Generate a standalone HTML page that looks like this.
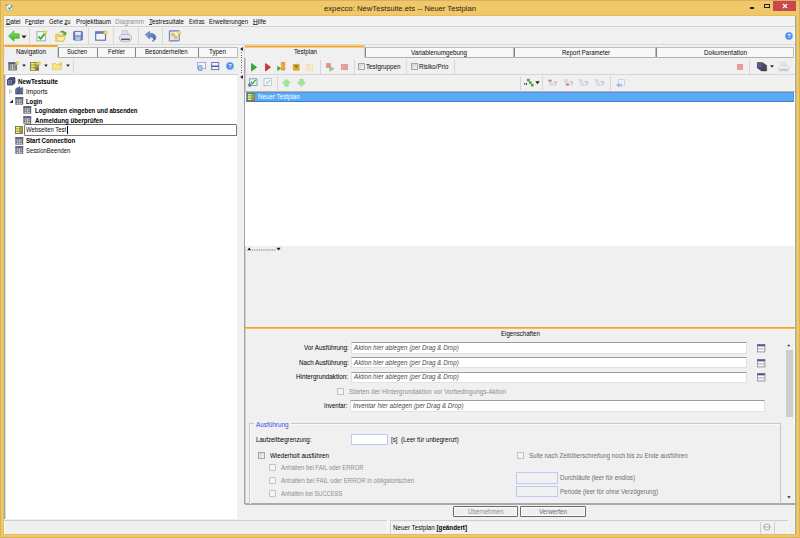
<!DOCTYPE html>
<html lang="de">
<head>
<meta charset="utf-8">
<title>expecco: NewTestsuite.ets -- Neuer Testplan</title>
<style>
html,body{margin:0;padding:0;}
body{width:800px;height:538px;overflow:hidden;background:#f0c869;font-family:"Liberation Sans",sans-serif;font-size:7px;color:#111;position:relative;}
div,span{box-sizing:border-box;}
.a{position:absolute;}
svg{position:absolute;overflow:visible;}
.t{position:absolute;white-space:nowrap;line-height:10px;font-size:6.3px;transform-origin:0 50%;color:#0a0a0a;}
.t.cap{font-size:7.8px;line-height:12px;color:#2a2416;}
.t.b,.t b{font-weight:bold;color:#000;}
.t.gray{color:#8e8e8e;}
.t.gray2{color:#6e6e6e;}
.t.it{font-style:italic;color:#4a4a4a;}
.t.blue{color:#2f55d4;}
.t.wht{color:#fff;}
.t.lbl{color:#000;}
.t u{text-decoration:underline;text-decoration-thickness:0.500px;text-underline-offset:0.200px;text-decoration-color:#444;}
.sep{position:absolute;width:1px;background:#d6d6d6;}
.tab{position:absolute;background:#f8f8f8;border:1px solid #bcbcbc;border-left-color:#848484;border-bottom-color:#b0b0b0;border-radius:0 0 0 1.500px;}
.hl{position:absolute;height:1px;background:#d9d9d9;}
.chk{position:absolute;width:7px;height:7px;border:1px solid #c2c2c2;background:#f5f5f5;}
.chk.d{border-color:#a6a6a6;background:linear-gradient(135deg,#cecece,#f8f8f8);}
.inp{position:absolute;background:#fff;border:1px solid #e2e2e2;border-top:1px solid #9c9c9c;}
.inpb{position:absolute;background:#f1f1f1;border:1px solid #bfcaf2;}
.btn{position:absolute;background:#efefef;border:1px solid #6a6a6a;box-shadow:inset 0 0 0 1px #fafafa;border-radius:1px;}

</style>
</head>
<body>
<!-- title bar -->
<div class="a" style="left:0;top:0;width:800px;height:16px;background:#f0c869"></div>
<svg style="left:5.300px;top:3.800px" width="8.500" height="7.500" viewBox="0 0 8.500 7.500"><path d="M0.600 1.200L6.300 0.300 7.800 5.800 2.300 7.100z" fill="#eef1f8" stroke="#a8a4b8" stroke-width="0.600"/><path d="M0.400 0.800l2.200-.4.300 1.200-2.200.5z" fill="#d86a5a"/><path d="M3.200 3.600l1.300 1.500L7.400 1.300" stroke="#4aa83e" stroke-width="1.200" fill="none"/></svg>
<div class="a" style="left:750px;top:7px;width:4px;height:2px;background:#222"></div>
<div class="a" style="left:764px;top:3.500px;width:5.500px;height:4px;border:0.900px solid #222;border-top-width:1.500px"></div>
<div class="a" style="left:773px;top:0;width:22.5px;height:11px;background:#c8484b"></div>
<svg style="left:781.5px;top:3px" width="6" height="6" viewBox="0 0 6 6"><path d="M1 1l4 4M5 1l-4 4" stroke="#fff" stroke-width="1.2"/></svg>

<div class="a" style="left:0;top:0;width:800px;height:538px;border:1px solid #d6b25e;border-top-width:0.800px"></div>
<div class="a" style="left:3px;top:15px;width:794px;height:520px;border:1px solid #e6bc5a"></div>
<div class="a" style="left:4px;top:16px;width:792px;height:518px;background:#a6a6a6"></div>
<!-- client -->
<div class="a" style="left:4px;top:16px;width:791px;height:518px;background:#f0f0f0;border-right:1.200px solid #fafafc;border-left:1px solid #fafafc;border-top:1px solid #fafafc"></div>
<div class="a" style="left:4px;top:16px;width:791px;height:10px;background:#f3f3f3"></div>
<div class="hl" style="left:4px;top:26px;width:791px;background:#d4d4d4"></div>
<div class="hl" style="left:4px;top:44.400px;width:791px;background:#dbdbdb"></div>

<!-- main toolbar icons -->
<svg style="left:7.500px;top:29.800px" width="12" height="12" viewBox="0 0 12 12"><defs><linearGradient id="ga" x1="0" y1="0" x2="0" y2="1"><stop offset="0" stop-color="#9cea7c"/><stop offset="0.500" stop-color="#5ccc3c"/><stop offset="1" stop-color="#3fae2a"/></linearGradient></defs><path d="M0.500 6L6 0.800v3h5.200v4.400H6v3z" fill="url(#ga)" stroke="#3c9c28" stroke-width="0.600" stroke-linejoin="round"/></svg>
<svg style="left:21px;top:34.5px" width="6" height="4" viewBox="0 0 6 4"><path d="M0.5 0.5h5L3 3.5z" fill="#222"/></svg>
<div class="sep" style="left:29px;top:28px;height:16px"></div>
<svg style="left:36.300px;top:30px" width="11.500" height="11.500" viewBox="0 0 12 12"><rect x="1" y="1.800" width="8.800" height="9.500" fill="#fafbfd" stroke="#9aa4b8" stroke-width="1"/><path d="M2.600 6.600l2.200 2.600L9 3.800" stroke="#2cc020" stroke-width="2" fill="none" stroke-linejoin="round"/><path d="M9.600 0l.7 1.400 1.500.2-1.100 1 .3 1.500-1.400-.7-1.300.7.200-1.500-1-1 1.500-.2z" fill="#f7dc58" stroke="#dcb030" stroke-width="0.300"/></svg>
<svg style="left:54.600px;top:30px" width="11.500" height="12" viewBox="0 0 12 12"><path d="M0.800 4h3.300l1 1h4.200v6.300h-8.500z" fill="#f3d46c" stroke="#dcae3c" stroke-width="0.700"/><path d="M0.800 11.300l1.800-4.600h8.300l-2 4.600z" fill="#fbeea6" stroke="#e0b446" stroke-width="0.700"/><path d="M5 2.200c2-2.200 4.600-1.900 5.600.2l1.100-.6-.3 3.700-3.300-1.500 1.100-.6c-.8-1.300-2.400-1.500-4.200-1.200z" fill="#3eb42c" stroke="#2a8c1c" stroke-width="0.300"/></svg>
<svg style="left:72.500px;top:31.200px" width="10" height="9.500" viewBox="0 0 11 11"><rect x="0.500" y="0.500" width="10" height="10" rx="0.800" fill="#6d82c6" stroke="#46589c" stroke-width="0.900"/><rect x="2.200" y="1" width="6.600" height="4" fill="#e4eaf8"/><rect x="2.600" y="6.400" width="5.800" height="4.100" fill="#c2cdea"/><path d="M2.600 7.800h5.800M2.600 9.200h5.800" stroke="#9aa8d4" stroke-width="0.500"/></svg>
<div class="sep" style="left:88px;top:28px;height:16px"></div>
<svg style="left:95px;top:30px" width="13" height="12" viewBox="0 0 13 12"><rect x="0.700" y="1.800" width="9.800" height="8.400" fill="#f6f4f6" stroke="#5c6cb0" stroke-width="1.100"/><rect x="0.700" y="1.800" width="9.800" height="2" fill="#6676b8"/><path d="M10.600 0l.8 1.600 1.700.3-1.200 1.200.3 1.700-1.600-.8-1.500.8.300-1.700L8.200 1.900l1.700-.3z" fill="#f7dc58" stroke="#dcb030" stroke-width="0.300"/></svg>
<div class="sep" style="left:113px;top:28px;height:16px"></div>
<svg style="left:119px;top:29.500px" width="13" height="12.500" viewBox="0 0 13 12.500"><path d="M3.200 0.500h5l1.600 5h-7z" fill="#d4e0f4" stroke="#9eb0d0" stroke-width="0.500"/><path d="M0.600 6.500L2.500 4.500h8l1.900 2v3.200l-2 2h-8l-1.800-2z" fill="#e4e6ea" stroke="#9a9ea8" stroke-width="0.600"/><path d="M2.200 8.600h8.600v1.600h-8.600z" fill="#484c54"/><path d="M3 10.200h7v1.300h-7z" fill="#fafafa" stroke="#a8acb4" stroke-width="0.400"/></svg>
<div class="sep" style="left:138px;top:28px;height:16px"></div>
<svg style="left:144.800px;top:30.800px" width="11.500" height="10.500" viewBox="0 0 11.500 10.500"><defs><linearGradient id="gb" x1="0" y1="0" x2="1" y2="1"><stop offset="0" stop-color="#8eaae2"/><stop offset="1" stop-color="#3f5eb0"/></linearGradient></defs><path d="M0.300 3.600L4.600 0.300v2c3.800 0 6.300 1.500 6.300 4.300 0 2-1.600 3.300-3.800 3.700 1.300-1 1.600-1.900 1.200-2.900-.5-1.200-1.800-1.500-3.700-1.500v2.100z" fill="url(#gb)" stroke="#3c58a4" stroke-width="0.500" stroke-linejoin="round"/></svg>
<div class="sep" style="left:162px;top:28px;height:16px"></div>
<svg style="left:168px;top:29.800px" width="13.500" height="12" viewBox="0 0 13.500 12"><rect x="1.400" y="0.900" width="9.800" height="10" rx="0.800" fill="#dbe6f8" stroke="#6a7ec8" stroke-width="1.100"/><path d="M3.500 3.500a4 4 0 0 1 5.500 5.500" stroke="#f4f6fc" stroke-width="1.200" fill="none"/><path d="M5 4.600l3 3" stroke="#c89a20" stroke-width="0.800"/><circle cx="4.900" cy="4.400" r="1.500" fill="#f2c22e" stroke="#cf9a18" stroke-width="0.300"/><circle cx="7.900" cy="7.400" r="1.500" fill="#f2c22e" stroke="#cf9a18" stroke-width="0.300"/><path d="M11.200 0.200l.8 1.500 1.600.3-1.200 1.100.3 1.700-1.500-.8-1.500.8.300-1.700L8.800 2l1.600-.3z" fill="#f7dc58" stroke="#dcb030" stroke-width="0.300"/><circle cx="1.500" cy="10.600" r="1.100" fill="#f29a38"/></svg>
<svg style="left:784.500px;top:32.200px" width="8" height="8" viewBox="0 0 8 8"><circle cx="4" cy="4" r="3.700" fill="#4a8cf0" stroke="#86b0f4" stroke-width="0.500"/><text x="4" y="6.200" font-size="5.800" font-weight="bold" fill="#fff" text-anchor="middle" font-family="Liberation Sans, sans-serif">?</text></svg>

<!-- left panel: tabs -->
<div class="tab" style="left:57.800px;top:47px;width:40.600px;height:10.600px"></div>
<div class="tab" style="left:97.400px;top:47px;width:39.000px;height:10.600px"></div>
<div class="tab" style="left:135.400px;top:47px;width:63.400px;height:10.600px"></div>
<div class="tab" style="left:197.800px;top:47px;width:39.800px;height:10.600px"></div>
<div class="a" style="left:4px;top:45px;width:54px;height:13px;background:#f0f0f0;border-top:2px solid #f6a526;border-right:1px solid #d4d4d4;border-left:1px solid #e4e4e4"></div>
<!-- nav toolbar -->
<div class="a" style="left:4px;top:58px;width:233.500px;height:16.500px;background:#f0f0f0"></div>
<div class="hl" style="left:4px;top:74px;width:233.500px;background:#d2d2d2"></div>
<div class="sep" style="left:73.200px;top:59.500px;height:13.500px"></div>
<!-- tree area -->
<div class="a" style="left:4.100px;top:75px;width:233.100px;height:444px;background:#fff;border-left:1.100px solid #a4a4a4"></div>
<div class="a" style="left:5.200px;top:75px;width:0.900px;height:444px;background:#dcdce0"></div>

<!-- nav toolbar icons -->
<svg style="left:8px;top:60.800px" width="11.500" height="9.700" viewBox="0 0 12 11" preserveAspectRatio="none"><rect x="0.300" y="1.500" width="9" height="9.200" fill="#6c6c70"/><rect x="0.300" y="1.500" width="9" height="1.500" fill="#4a5a96"/><path d="M1.800 4.600h1.800M1.800 6.800h1.800M1.800 9h1.800M6 4.600h1.800M6 6.800h1.800M6 9h1.800" stroke="#d2d2d6" stroke-width="1.300"/><path d="M4.800 3.600v6.600" stroke="#ededf0" stroke-width="1"/><path d="M9.300 0l.8 1.500 1.600.3-1.200 1.100.3 1.700-1.500-.8-1.500.8.300-1.700L6.900 1.800l1.600-.3z" fill="#f5d64a" stroke="#d8a820" stroke-width="0.300"/></svg>
<svg style="left:21.700px;top:64.200px" width="4" height="3.400" viewBox="0 0 5 4"><path d="M0.300 0.500h4.400L2.500 3.500z" fill="#222"/></svg>
<svg style="left:30px;top:60.800px" width="11.500" height="9.700" viewBox="0 0 12 11" preserveAspectRatio="none"><rect x="0.500" y="1.500" width="8.500" height="9" fill="#f3e27a" stroke="#6a6a3a" stroke-width="0.800"/><path d="M0.500 4.500h8.500M0.500 7.500h8.500M5.500 1.500v9" stroke="#6a6a3a" stroke-width="0.700"/><rect x="5.800" y="4.800" width="3" height="2.500" fill="#58b848"/><rect x="5.800" y="7.800" width="3" height="2.400" fill="#d84a3a"/><path d="M9.300 0l.8 1.500 1.600.3-1.200 1.100.3 1.700-1.500-.8-1.500.8.300-1.700L6.900 1.800l1.600-.3z" fill="#f5d64a" stroke="#d8a820" stroke-width="0.300"/></svg>
<svg style="left:43.700px;top:64.200px" width="4" height="3.400" viewBox="0 0 5 4"><path d="M0.300 0.500h4.400L2.500 3.500z" fill="#222"/></svg>
<svg style="left:52px;top:61.800px" width="11" height="8" viewBox="0 0 12 10" preserveAspectRatio="none"><path d="M0.500 2h3.500l1 1.200h5v6.300h-9.500z" fill="#f8e28a" stroke="#dcb850" stroke-width="0.700"/><path d="M9.300 0l.7 1.400 1.500.2-1.100 1 .3 1.600-1.400-.7-1.400.7.300-1.600-1.100-1 1.500-.2z" fill="#f5d64a" stroke="#d8a820" stroke-width="0.300"/></svg>
<svg style="left:65.700px;top:64.200px" width="4" height="3.400" viewBox="0 0 5 4"><path d="M0.300 0.500h4.400L2.500 3.500z" fill="#222"/></svg>
<svg style="left:196.900px;top:62px" width="9.200" height="9" viewBox="0 0 10 10"><rect x="0.500" y="0.500" width="9" height="7" fill="#f2f5fb" stroke="#8ca2d2" stroke-width="0.900"/><rect x="1.800" y="4.200" width="3.600" height="5.200" fill="#b8c8ea" stroke="#5a78b8" stroke-width="0.700"/></svg>
<svg style="left:211.400px;top:62px" width="8.400" height="8.200" viewBox="0 0 9 9"><rect x="0.600" y="0.600" width="7.800" height="7.800" fill="#f4f6fb" stroke="#5a70b8" stroke-width="1"/><path d="M0.600 4.700h7.800" stroke="#4a62ac" stroke-width="1.700"/></svg>
<svg style="left:226.400px;top:62.400px" width="8" height="8" viewBox="0 0 8 8"><circle cx="4" cy="4" r="3.700" fill="#4a8cf0" stroke="#86b0f4" stroke-width="0.500"/><text x="4" y="6.200" font-size="5.800" font-weight="bold" fill="#fff" text-anchor="middle" font-family="Liberation Sans, sans-serif">?</text></svg>

<!-- tree icons -->
<svg style="left:7px;top:77px" width="8.500" height="8.500" viewBox="0 0 8.500 8.500"><path d="M0.500 2.500L3 0.500h5v5.500L5.500 8h-5z" fill="#46527e" stroke="#262c4a" stroke-width="0.600"/><rect x="0.800" y="2.800" width="4.700" height="5" fill="#8f9cc8" stroke="#262c4a" stroke-width="0.500"/><path d="M0.800 4.400h4.700M0.800 6h4.700M3.100 2.800v5" stroke="#262c4a" stroke-width="0.450"/></svg>
<svg style="left:9.300px;top:88.600px" width="4" height="5" viewBox="0 0 4 5"><path d="M0.600 0.500L3.200 2.500 0.600 4.500z" fill="#fff" stroke="#9a9a9a" stroke-width="0.600"/></svg>
<svg style="left:15px;top:86.400px" width="8.500" height="8.300" viewBox="0 0 8.500 8.500"><path d="M0.500 3L2.500 1.500V8h-2zM3 2L5 0.500V8H3zM5.500 2.500L7.800 1.500V8H5.500z" fill="#5d6da6" stroke="#2b3358" stroke-width="0.500"/><path d="M0.500 8h7.500" stroke="#2b3358" stroke-width="0.600"/></svg>
<svg style="left:9px;top:99px" width="4.500" height="4.500" viewBox="0 0 4.500 4.500"><path d="M4 0.500V4H0.500z" fill="#222"/></svg>
<svg style="left:15px;top:97px" width="8.500" height="8" viewBox="0 0 8.500 8"><rect x="0.300" y="0.300" width="7.900" height="7.400" fill="#6c6c70"/><rect x="0.300" y="0.300" width="7.900" height="1.300" fill="#4a5a96"/><path d="M1.600 2.900h1.500M1.600 4.700h1.500M1.600 6.500h1.500M5.400 2.900h1.500M5.400 4.700h1.500M5.400 6.500h1.500" stroke="#d2d2d6" stroke-width="1.100"/><path d="M4.250 2.200v5.300" stroke="#ededf0" stroke-width="0.900"/></svg>
<svg style="left:23px;top:106.4px" width="8.500" height="8" viewBox="0 0 8.500 8"><rect x="0.300" y="0.300" width="7.900" height="7.400" fill="#6c6c70"/><rect x="0.300" y="0.300" width="7.900" height="1.300" fill="#4a5a96"/><path d="M1.600 2.900h1.500M1.600 4.700h1.500M1.600 6.500h1.500M5.400 2.900h1.500M5.400 4.700h1.500M5.400 6.500h1.500" stroke="#d2d2d6" stroke-width="1.100"/><path d="M4.250 2.200v5.300" stroke="#ededf0" stroke-width="0.900"/></svg>
<svg style="left:23px;top:116.3px" width="8.500" height="8" viewBox="0 0 8.500 8"><rect x="0.300" y="0.300" width="7.900" height="7.400" fill="#6c6c70"/><rect x="0.300" y="0.300" width="7.900" height="1.300" fill="#4a5a96"/><path d="M1.600 2.900h1.500M1.600 4.700h1.500M1.600 6.500h1.500M5.400 2.900h1.500M5.400 4.700h1.500M5.400 6.500h1.500" stroke="#d2d2d6" stroke-width="1.100"/><path d="M4.250 2.200v5.300" stroke="#ededf0" stroke-width="0.900"/></svg>
<svg style="left:15.3px;top:126.3px" width="8" height="8" viewBox="0 0 8 8"><rect x="0.400" y="0.400" width="7.200" height="7.200" fill="#f6ea80" stroke="#6e6a30" stroke-width="0.800"/><path d="M0.400 2.800h7.200M0.400 5.200h7.200M4.800 0.400v7.200" stroke="#6e6a30" stroke-width="0.600"/><rect x="5.100" y="0.800" width="2.200" height="1.800" fill="#52ba4a"/><rect x="5.100" y="3.100" width="2.200" height="1.900" fill="#52ba4a"/><rect x="5.100" y="5.500" width="2.200" height="1.800" fill="#e4603a"/></svg>
<svg style="left:15px;top:136.5px" width="8.500" height="8" viewBox="0 0 8.500 8"><rect x="0.300" y="0.300" width="7.900" height="7.400" fill="#6c6c70"/><rect x="0.300" y="0.300" width="7.900" height="1.300" fill="#4a5a96"/><path d="M1.600 2.900h1.500M1.600 4.700h1.500M1.600 6.500h1.500M5.400 2.900h1.500M5.400 4.700h1.500M5.400 6.500h1.500" stroke="#d2d2d6" stroke-width="1.100"/><path d="M4.250 2.200v5.300" stroke="#ededf0" stroke-width="0.900"/></svg>
<svg style="left:15px;top:146.3px" width="8.500" height="8" viewBox="0 0 8.500 8"><rect x="0.300" y="0.300" width="7.900" height="7.400" fill="#6c6c70"/><rect x="0.300" y="0.300" width="7.900" height="1.300" fill="#4a5a96"/><path d="M1.600 2.900h1.500M1.600 4.700h1.500M1.600 6.500h1.500M5.400 2.900h1.500M5.400 4.700h1.500M5.400 6.500h1.500" stroke="#d2d2d6" stroke-width="1.100"/><path d="M4.250 2.200v5.300" stroke="#ededf0" stroke-width="0.900"/></svg>
<div class="a" style="left:24px;top:124.200px;width:212.500px;height:11.500px;border-radius:1.500px;background:#fff;border:1.100px solid #787878;border-top-color:#6a6a6a"></div>
<div class="a" style="left:66.900px;top:126px;width:0.900px;height:7.500px;background:#000"></div>

<!-- splitter -->
<div class="a" style="left:237.500px;top:46px;width:7px;height:474px;background:#f0f0f0"></div>
<div class="a" style="left:240.800px;top:51.500px;width:1.100px;height:23px;background:repeating-linear-gradient(#666 0 1.100px,transparent 1.100px 2.500px)"></div>
<svg style="left:239.500px;top:47px" width="3" height="4" viewBox="0 0 3 4"><path d="M2.800 0v4L0.200 2z" fill="#111"/></svg>
<svg style="left:239.500px;top:74.500px" width="3" height="4" viewBox="0 0 3 4"><path d="M2.800 0v4L0.200 2z" fill="#111"/></svg>

<!-- right panel -->
<div class="a" style="left:244px;top:58px;width:2px;height:446px;background:linear-gradient(90deg,#a4a4a4 0 1px,#d0d0d0 1px 2px)"></div>
<div class="tab" style="left:365px;top:47.300px;width:148.800px;height:10.500px"></div>
<div class="tab" style="left:514px;top:47.300px;width:141.800px;height:10.500px"></div>
<div class="tab" style="left:656px;top:47.300px;width:138.300px;height:10.500px"></div>
<div class="a" style="left:244px;top:45px;width:121px;height:13px;background:linear-gradient(#f4cb88 0 1px,#f7a823 1px 2px,#f4cc8a 2px 3px,#f0f0f0 3px);border-right:1px solid #cfcfcf;border-left:1px solid #dcdcdc"></div>
<!-- toolbar row 1 -->
<div class="hl" style="left:245px;top:74.300px;width:550px;background:#d6d6d6"></div>
<div class="hl" style="left:245px;top:90.500px;width:550px;background:#b2b2b2;height:1.500px"></div>
<!-- list -->
<div class="a" style="left:245.200px;top:92px;width:549.800px;height:153.500px;background:#fff"></div>
<div class="a" style="left:245.600px;top:92.300px;width:548.400px;height:9.800px;background:#59a9f4;border:0.600px solid #4a98ea;border-bottom:0.800px solid #3c80d4"></div>
<!-- right toolbar row1 icons -->
<svg style="left:250.5px;top:62.5px" width="6" height="8.500" viewBox="0 0 6 8.500"><path d="M0.500 0.500L5.600 4.250 0.500 8z" fill="#35b02a" stroke="#1f7d18" stroke-width="0.600" stroke-linejoin="round"/></svg>
<svg style="left:265px;top:62.5px" width="6" height="8.500" viewBox="0 0 6 8.500"><path d="M0.500 0.500L5.600 4.250 0.500 8z" fill="#d8372c" stroke="#9c1d18" stroke-width="0.600" stroke-linejoin="round"/></svg>
<svg style="left:277.200px;top:62.400px" width="8.800" height="8.800" viewBox="0 0 9 9.500"><path d="M0.300 4.500L3.800 7 0.300 9.300z" fill="#35b02a" stroke="#1f7d18" stroke-width="0.400"/><rect x="4.300" y="0.400" width="4" height="3.600" rx="0.500" fill="#f4a820" stroke="#c07810" stroke-width="0.500"/><rect x="4.300" y="5" width="4" height="3.800" rx="0.500" fill="#f4a820" stroke="#c07810" stroke-width="0.500"/></svg>
<svg style="left:293px;top:63.500px" width="6.500" height="6.500" viewBox="0 0 6.500 6.500"><rect x="0.300" y="0.300" width="5.900" height="5.900" rx="0.600" fill="#f2a61e" stroke="#c27c12" stroke-width="0.500"/><path d="M1 1.600h4.500L3.250 4z" fill="#2f9e2a"/></svg>
<svg style="left:306.300px;top:63.600px" width="6.800" height="6.400" viewBox="0 0 7 7.500" preserveAspectRatio="none"><rect x="0.300" y="0.300" width="2.400" height="6.900" fill="#fdf0c4" stroke="#ecd28a" stroke-width="0.500"/><rect x="4" y="0.300" width="2.400" height="6.900" fill="#fdf0c4" stroke="#ecd28a" stroke-width="0.500"/></svg>
<div class="sep" style="left:320px;top:59.500px;height:14px"></div>
<svg style="left:326px;top:62.500px" width="8.500" height="8.500" viewBox="0 0 8.500 8.500"><rect x="0.300" y="0.300" width="4.200" height="4.200" fill="#ee8c96" stroke="#d8707c" stroke-width="0.400"/><path d="M3.800 3.200L8 5.800 3.800 8.300z" fill="#8ed08a" stroke="#6cb868" stroke-width="0.400"/></svg>
<div class="a" style="left:341.200px;top:63.600px;width:6.600px;height:6.600px;background:radial-gradient(#f48c90,#f0a6ae);border:0.600px solid #e29aa4"></div>
<div class="sep" style="left:354px;top:59.500px;height:14px"></div>
<div class="chk d" style="left:358px;top:63.300px;width:6.800px;height:6.800px"></div>
<div class="sep" style="left:406.300px;top:59.500px;height:14px"></div>
<div class="chk d" style="left:411px;top:63.300px;width:6.800px;height:6.800px"></div>
<div class="sep" style="left:453.800px;top:59.500px;height:14px"></div>
<div class="a" style="left:736.600px;top:63.600px;width:6.600px;height:6.600px;background:radial-gradient(#f48c90,#f0a6ae);border:0.600px solid #e29aa4"></div>
<div class="sep" style="left:749px;top:59.500px;height:14px"></div>
<svg style="left:756.500px;top:62px" width="10" height="9.500" viewBox="0 0 10 9.500"><path d="M0.300 0.500h5.200l4.200 3v5.500h-5.200l-4.200-3z" fill="#48484e" stroke="#2a2a30" stroke-width="0.400"/><rect x="1.200" y="1.200" width="3.600" height="4.400" fill="#5a5cc4"/><path d="M3 1.200v4.400" stroke="#3a3a8a" stroke-width="0.500"/></svg>
<svg style="left:770px;top:65px" width="4" height="3" viewBox="0 0 4 3"><path d="M0.200 0.300h3.600L2 2.700z" fill="#222"/></svg>
<svg style="left:778.300px;top:60.500px" width="11.500" height="12" viewBox="0 0 13 12.500" opacity="0.450"><path d="M3.200 0.500h5l1.600 5h-7z" fill="#cfe0f8" stroke="#9eb0d0" stroke-width="0.500"/><path d="M0.600 6.500L2.500 4.500h8l1.900 2v3.200l-2 2h-8l-1.800-2z" fill="#e4e6ea" stroke="#9a9ea8" stroke-width="0.600"/><path d="M2.200 8.600h8.600v1.600h-8.600z" fill="#70747c"/><path d="M3 10.200h7v1.300h-7z" fill="#fafafa" stroke="#a8acb4" stroke-width="0.400"/></svg>
<!-- right toolbar row2 icons -->
<svg style="left:248px;top:78px" width="9.500" height="9" viewBox="0 0 9.500 9"><rect x="1.500" y="0.800" width="7.500" height="6.700" fill="#eaf2fb" stroke="#6c8ec4" stroke-width="0.800"/><path d="M3 4l1.600 1.700L7.600 1.800" stroke="#2f9e2c" stroke-width="1.100" fill="none"/><circle cx="1.800" cy="7" r="1.500" fill="#4a9a5a" stroke="#3a6a9a" stroke-width="0.500"/></svg>
<svg style="left:263px;top:78px" width="9" height="9" viewBox="0 0 9 9"><rect x="1" y="0.500" width="7.500" height="7" fill="#f2f6fb" stroke="#a8bcd8" stroke-width="0.700"/><path d="M3 4l1.400 1.500L7 2" stroke="#8ccc88" stroke-width="1" fill="none"/><path d="M0.500 7.500h3" stroke="#e89aa0" stroke-width="1"/></svg>
<div class="sep" style="left:277.300px;top:76px;height:14px"></div>
<svg style="left:282.300px;top:78.900px" width="8.800" height="7.600" viewBox="0 0 9 8.500" preserveAspectRatio="none"><path d="M4.500 0.400L8.600 4.400H6.300V8H2.700V4.400H0.400z" fill="#a6e6a0" stroke="#7ad274" stroke-width="0.600" stroke-linejoin="round"/></svg>
<svg style="left:297px;top:78.700px" width="8.800" height="7.600" viewBox="0 0 9 8.500" preserveAspectRatio="none"><path d="M4.500 8.100L8.600 4.100H6.300V0.500H2.700V4.100H0.400z" fill="#a6e6a0" stroke="#7ad274" stroke-width="0.600" stroke-linejoin="round"/></svg>
<div class="sep" style="left:520px;top:76px;height:14px"></div>
<svg style="left:523.500px;top:78px" width="10" height="9" viewBox="0 0 10 9"><path d="M3.800 2l2 2.500 2 2" stroke="#555" stroke-width="0.600" fill="none"/><rect x="3" y="0.800" width="2.600" height="2.400" fill="#3aa83a"/><rect x="5" y="3.400" width="2.600" height="2.400" fill="#3aa83a"/><rect x="7" y="6" width="2.600" height="2.400" fill="#3aa83a"/><path d="M0.300 4.600l1.400 1.300-1.400 1.300zM2 4.600l1.400 1.300L2 7.200z" fill="#1a2a6a"/></svg>
<svg style="left:534.500px;top:81px" width="5" height="3.500" viewBox="0 0 5 3.500"><path d="M0.300 0.300h4.400L2.500 3.200z" fill="#222"/></svg>
<div class="sep" style="left:542.300px;top:76px;height:14px"></div>
<svg style="left:548px;top:78.500px" width="10" height="8" viewBox="0 0 10 8"><rect x="0.500" y="0.800" width="3" height="2" fill="#ee7070" stroke="#b4bccc" stroke-width="0.400"/><rect x="2" y="4.500" width="3" height="2.200" fill="#dfe6f2" stroke="#b4bccc" stroke-width="0.400"/><path d="M2 2.800v1.700" stroke="#a8b0c0" stroke-width="0.500"/><text x="7.300" y="7" font-size="7" fill="#8e94a6" text-anchor="middle" font-family="Liberation Sans, sans-serif">?</text></svg>
<svg style="left:563.5px;top:78.500px" width="10" height="8" viewBox="0 0 10 8"><rect x="0.500" y="0.800" width="3" height="2" fill="#dfe6f2" stroke="#b4bccc" stroke-width="0.400"/><rect x="2" y="4.500" width="3" height="2.200" fill="#ee7070" stroke="#b4bccc" stroke-width="0.400"/><path d="M2 2.800v1.700" stroke="#a8b0c0" stroke-width="0.500"/><text x="7.300" y="7" font-size="7" fill="#8e94a6" text-anchor="middle" font-family="Liberation Sans, sans-serif">?</text></svg>
<svg style="left:579.3px;top:78.500px" width="10" height="8" viewBox="0 0 10 8"><rect x="0.500" y="0.800" width="3" height="2" fill="#dfe6f2" stroke="#b4bccc" stroke-width="0.400"/><rect x="2" y="4.500" width="3" height="2.200" fill="#dfe6f2" stroke="#b4bccc" stroke-width="0.400"/><path d="M2 2.800v1.700" stroke="#a8b0c0" stroke-width="0.500"/><text x="7.300" y="7" font-size="7" fill="#8e94a6" text-anchor="middle" font-family="Liberation Sans, sans-serif">?</text></svg>
<svg style="left:595px;top:78.500px" width="10" height="8" viewBox="0 0 10 8"><rect x="0.500" y="0.800" width="3" height="2" fill="#dfe6f2" stroke="#b4bccc" stroke-width="0.400"/><rect x="2" y="4.500" width="3" height="2.200" fill="#dfe6f2" stroke="#b4bccc" stroke-width="0.400"/><path d="M2 2.800v1.700" stroke="#a8b0c0" stroke-width="0.500"/><text x="7.300" y="7" font-size="7" fill="#8e94a6" text-anchor="middle" font-family="Liberation Sans, sans-serif">?</text></svg>
<div class="sep" style="left:610.300px;top:76px;height:14px"></div>
<svg style="left:616px;top:78.500px" width="9" height="8.500" viewBox="0 0 9 8.500"><rect x="2.500" y="0.400" width="6" height="6.500" fill="#eef2fa" stroke="#b8c4dc" stroke-width="0.600"/><path d="M0.300 6l2.500-2v1.200h3v1.800h-3v1.200z" fill="#a4bcea" stroke="#8ca8dc" stroke-width="0.300"/></svg>
<svg style="left:247.100px;top:93.100px" width="8" height="8" viewBox="0 0 8 8"><rect x="0.400" y="0.400" width="7.200" height="7.200" fill="#f6ea80" stroke="#6e6a30" stroke-width="0.800"/><path d="M0.400 2.800h7.200M0.400 5.200h7.200M4.800 0.400v7.200" stroke="#6e6a30" stroke-width="0.600"/><rect x="5.100" y="0.800" width="2.200" height="1.800" fill="#52ba4a"/><rect x="5.100" y="3.100" width="2.200" height="1.900" fill="#52ba4a"/><rect x="5.100" y="5.500" width="2.200" height="1.800" fill="#e4603a"/></svg>
<svg style="left:246.500px;top:247.300px" width="35" height="4" viewBox="0 0 35 4"><path d="M0.300 3.300L2.200 0.500 4.100 3.300z" fill="#111"/><path d="M29.500 0.700h4.200l-2.100 2.800z" fill="#111"/><path d="M5 3h24" stroke="#444" stroke-width="0.700" stroke-dasharray="1 0.800"/></svg>

<!-- properties panel -->
<div class="a" style="left:245px;top:327px;width:549.500px;height:2px;background:linear-gradient(#f6a52c 0 1px,#f9ba52 1px 2px)"></div>
<div class="a" style="left:245px;top:503px;width:550px;height:1.500px;background:#a9a9a9"></div>
<div class="inp" style="left:351px;top:342.400px;width:395.800px;height:11.200px"></div>
<div class="inp" style="left:351px;top:357.300px;width:395.800px;height:11.200px"></div>
<div class="inp" style="left:351px;top:371.600px;width:395.800px;height:11.200px"></div>
<div class="inp" style="left:350px;top:400px;width:414.500px;height:11.500px"></div>
<div class="chk" style="left:337px;top:388.300px"></div>
<!-- fieldset -->
<div class="a" style="left:249.300px;top:423.100px;width:531.800px;height:81px;border:1px solid #c8c8c8;border-bottom:none;box-shadow:inset 1px 1px 0 #fafafa"></div>
<div class="a" style="left:254px;top:422px;width:36.500px;height:4px;background:#f0f0f0"></div>
<div class="inpb" style="left:351px;top:434.300px;width:36.500px;height:11.200px;background:#fff"></div>
<div class="chk d" style="left:258.300px;top:452px"></div>
<div class="chk" style="left:269.100px;top:464.200px;border-radius:1px"></div>
<div class="chk" style="left:269.100px;top:477.100px;border-radius:1px"></div>
<div class="chk" style="left:269.100px;top:490.200px;border-radius:1px"></div>
<div class="chk" style="left:517.400px;top:452px"></div>
<div class="inpb" style="left:516px;top:472.400px;width:41.600px;height:11.200px"></div>
<div class="inpb" style="left:516px;top:486.300px;width:41.600px;height:11.200px"></div>
<!-- scrollbar -->
<div class="a" style="left:785.500px;top:349.800px;width:7.200px;height:67px;background:#cdcdcd"></div>
<svg style="left:787.200px;top:343.700px" width="3.600" height="2.600" viewBox="0 0 4 3"><path d="M0.200 2.700L2 0.400 3.800 2.700z" fill="#333"/></svg>
<svg style="left:787px;top:496px" width="4" height="3" viewBox="0 0 4 3"><path d="M0.200 0.300h3.600L2 2.600z" fill="#333"/></svg>
<!-- buttons -->
<div class="btn" style="left:453px;top:506.300px;width:64.600px;height:11px"></div>
<div class="btn" style="left:520px;top:506.300px;width:65.600px;height:11px"></div>
<!-- status bar -->
<div class="hl" style="left:4px;top:520.400px;width:783.500px;background:#cecece;height:1.100px"></div>
<div class="a" style="left:390px;top:521.500px;width:370.500px;height:12px;background:#f2f2f2;border-left:1px solid #d4d4d4"></div>
<div class="a" style="left:760px;top:521.500px;width:14.500px;height:12px;background:#f1f1f1;border-left:1px solid #d0d0d0;border-right:1px solid #d0d0d0"></div>
<div class="a" style="left:774.500px;top:521.500px;width:13px;height:12px;background:#f1f1f1;border-right:1px solid #f8f8f8"></div>
<svg style="left:763.300px;top:523px" width="8" height="8" viewBox="0 0 8 8"><circle cx="4" cy="4" r="3" fill="#fafafa" stroke="#8a8a8a" stroke-width="0.700"/><path d="M0.600 4h6.800" stroke="#8a8a8a" stroke-width="0.700"/></svg>
<svg style="left:756.800px;top:343.700px" width="8.400" height="8.400" viewBox="0 0 9.500 9" preserveAspectRatio="none"><rect x="0.500" y="0.500" width="8.500" height="8" fill="#f8f9fb" stroke="#7a7e8c" stroke-width="0.800"/><rect x="0.500" y="0.500" width="8.500" height="2" fill="#4a5884"/><path d="M0.500 5.300h8.500" stroke="#7a7e8c" stroke-width="0.700"/></svg>
<svg style="left:756.800px;top:358.600px" width="8.400" height="8.400" viewBox="0 0 9.500 9" preserveAspectRatio="none"><rect x="0.500" y="0.500" width="8.500" height="8" fill="#f8f9fb" stroke="#7a7e8c" stroke-width="0.800"/><rect x="0.500" y="0.500" width="8.500" height="2" fill="#4a5884"/><path d="M0.500 5.300h8.500" stroke="#7a7e8c" stroke-width="0.700"/></svg>
<svg style="left:756.800px;top:372.700px" width="8.400" height="8.400" viewBox="0 0 9.500 9" preserveAspectRatio="none"><rect x="0.500" y="0.500" width="8.500" height="8" fill="#f8f9fb" stroke="#7a7e8c" stroke-width="0.800"/><rect x="0.500" y="0.500" width="8.500" height="2" fill="#4a5884"/><path d="M0.500 5.300h8.500" stroke="#7a7e8c" stroke-width="0.700"/></svg>
<div class="a" style="left:386.500px;top:520px;width:3.800px;height:14px;background:#f0f0f0;border-left:1px solid #fafafa"></div>

<!-- text labels -->
<span class="t cap" style="left:323.8px;top:2.5px;transform:scaleX(0.9861);">expecco: NewTestsuite.ets -- Neuer Testplan</span>
<span class="t" style="left:5.5px;top:17.0px;transform:scaleX(0.9851);"><u>D</u>atei</span>
<span class="t" style="left:24.5px;top:17.0px;transform:scaleX(0.9123);">F<u>e</u>nster</span>
<span class="t" style="left:49.0px;top:17.0px;transform:scaleX(0.9023);">Gehe <u>z</u>u</span>
<span class="t" style="left:75.5px;top:17.0px;transform:scaleX(0.9898);">Projektbaum</span>
<span class="t gray" style="left:115.0px;top:17.0px;transform:scaleX(0.9984);">Diagramm</span>
<span class="t" style="left:149.0px;top:17.0px;transform:scaleX(0.9799);"><u>T</u>estresultate</span>
<span class="t" style="left:188.6px;top:17.0px;transform:scaleX(0.8623);">Extras</span>
<span class="t" style="left:209.0px;top:17.0px;transform:scaleX(0.9604);">Erweiterungen</span>
<span class="t" style="left:252.6px;top:17.0px;transform:scaleX(1.0455);"><u>H</u>ilfe</span>
<span class="t" style="left:16.0px;top:47.1px;transform:scaleX(1.0079);">Navigation</span>
<span class="t" style="left:67.0px;top:46.7px;transform:scaleX(0.9364);">Suchen</span>
<span class="t" style="left:108.0px;top:46.7px;transform:scaleX(0.9519);">Fehler</span>
<span class="t" style="left:145.4px;top:46.7px;transform:scaleX(0.9654);">Besonderheiten</span>
<span class="t" style="left:209.0px;top:46.7px;transform:scaleX(0.9909);">Typen</span>
<span class="t b" style="left:18.0px;top:77.1px;transform:scaleX(0.9969);">NewTestsuite</span>
<span class="t" style="left:25.8px;top:87.1px;transform:scaleX(1.0286);">Imports</span>
<span class="t b" style="left:25.8px;top:96.7px;transform:scaleX(0.9335);">Login</span>
<span class="t b" style="left:34.5px;top:106.3px;transform:scaleX(0.9511);">Logindaten eingeben und absenden</span>
<span class="t b" style="left:34.5px;top:116.2px;transform:scaleX(0.9767);">Anmeldung überprüfen</span>
<span class="t" style="left:26.2px;top:125.1px;transform:scaleX(0.9386);">Webseiten Test</span>
<span class="t b" style="left:25.8px;top:136.2px;transform:scaleX(0.9698);">Start Connection</span>
<span class="t" style="left:25.8px;top:145.9px;transform:scaleX(0.9281);">SessionBeenden</span>
<span class="t" style="left:293.8px;top:46.8px;transform:scaleX(0.9807);">Testplan</span>
<span class="t" style="left:411.0px;top:47.9px;transform:scaleX(1.0017);">Variablenumgebung</span>
<span class="t" style="left:561.6px;top:47.9px;transform:scaleX(0.9591);">Report Parameter</span>
<span class="t" style="left:704.0px;top:47.9px;transform:scaleX(1.0151);">Dokumentation</span>
<span class="t" style="left:366.0px;top:62.3px;transform:scaleX(0.9922);">Testgruppen</span>
<span class="t" style="left:418.6px;top:62.3px;transform:scaleX(0.9769);">Risiko/Prio</span>
<span class="t wht" style="left:258.0px;top:92.2px;transform:scaleX(0.9893);">Neuer Testplan</span>
<span class="t" style="left:500.6px;top:329.3px;transform:scaleX(0.9719);">Eigenschaften</span>
<span class="t lbl" style="left:303.6px;top:343.3px;transform:scaleX(0.9997);">Vor Ausführung:</span>
<span class="t lbl" style="left:298.6px;top:357.7px;transform:scaleX(0.9948);">Nach Ausführung:</span>
<span class="t lbl" style="left:296.4px;top:372.3px;transform:scaleX(1.0103);">Hintergrundaktion:</span>
<span class="t it" style="left:354.2px;top:343.3px;transform:scaleX(0.9915);">Aktion hier ablegen (per Drag &amp; Drop)</span>
<span class="t it" style="left:354.2px;top:357.7px;transform:scaleX(0.9915);">Aktion hier ablegen (per Drag &amp; Drop)</span>
<span class="t it" style="left:354.2px;top:372.3px;transform:scaleX(0.9915);">Aktion hier ablegen (per Drag &amp; Drop)</span>
<span class="t gray" style="left:349.0px;top:386.5px;transform:scaleX(1.0034);">Starten der Hintergrundaktion vor Vorbedingungs-Aktion</span>
<span class="t lbl" style="left:323.6px;top:401.3px;transform:scaleX(0.9545);">Inventar:</span>
<span class="t it" style="left:353.0px;top:401.3px;transform:scaleX(0.9959);">Inventar hier ablegen (per Drag &amp; Drop)</span>
<span class="t blue" style="left:256.0px;top:419.6px;transform:scaleX(1.0118);">Ausführung</span>
<span class="t lbl" style="left:255.6px;top:435.1px;transform:scaleX(0.9706);">Laufzeitbegrenzung:</span>
<span class="t" style="left:391.4px;top:435.1px;transform:scaleX(0.9915);">[s]</span>
<span class="t" style="left:401.2px;top:435.1px;transform:scaleX(0.9771);">(Leer für unbegrenzt)</span>
<span class="t lbl" style="left:270.4px;top:450.7px;transform:scaleX(0.9856);">Wiederholt ausführen</span>
<span class="t gray" style="left:281.4px;top:463.4px;transform:scaleX(0.9351);">Anhalten bei FAIL oder ERROR</span>
<span class="t gray" style="left:281.4px;top:476.1px;transform:scaleX(0.9570);">Anhalten bei FAIL oder ERROR in obligatorischen</span>
<span class="t gray" style="left:281.4px;top:489.4px;transform:scaleX(0.9107);">Anhalten bei SUCCESS</span>
<span class="t gray2" style="left:529.4px;top:450.7px;transform:scaleX(0.9701);">Suite nach Zeitüberschreitung noch bis zu Ende ausführen</span>
<span class="t gray2" style="left:560.0px;top:473.1px;transform:scaleX(0.9828);">Durchläufe (leer für endlos)</span>
<span class="t gray2" style="left:560.0px;top:487.1px;transform:scaleX(0.9754);">Periode (leer für ohne Verzögerung)</span>
<span class="t gray" style="left:468.0px;top:507.1px;transform:scaleX(0.9724);">Übernehmen</span>
<span class="t gray2" style="left:539.0px;top:507.1px;transform:scaleX(0.9873);">Verwerfen</span>
<span class="t" style="left:393.0px;top:523.1px;transform:scaleX(0.9893);">Neuer Testplan <b>[geändert]</b></span>
</body>
</html>
